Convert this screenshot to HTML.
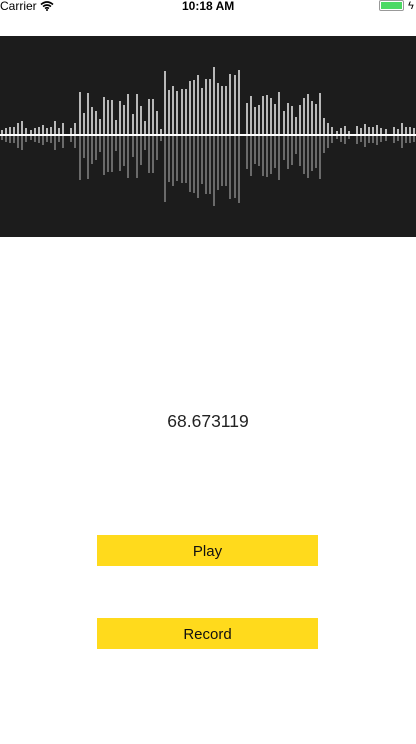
<!DOCTYPE html>
<html><head><meta charset="utf-8"><style>
body{margin:0;width:416px;height:744px;background:#fff;position:relative;overflow:hidden;font-family:"Liberation Sans",sans-serif}
.sb{position:absolute;top:0;height:12px;font-size:12px;line-height:12px;color:#000}
#wave{position:absolute;left:0;top:36px;width:416px;height:201px;background:#1c1c1c}
.u{position:absolute;width:2px;background:#b8b8b8}
.d{position:absolute;width:2px;background:#6a6a6a}
.line{position:absolute;left:0;top:98px;width:416px;height:2px;background:#fff}
.btn{position:absolute;left:97px;width:221px;height:31px;background:#ffda1c;text-align:center;line-height:33px;font-size:15px;color:#111}
</style></head><body>
<div class="sb" style="left:0">Carrier <svg width="14" height="10" viewBox="0 0 14 10" style="vertical-align:-1px"><path d="M1 3.5Q7 -1.5 13 3.5M3 5.5Q7 2.5 11 5.5M5 7.5Q7 6 9 7.5" stroke="#000" stroke-width="1.6" fill="none"/><circle cx="7" cy="9" r="1" fill="#000"/></svg></div>
<div class="sb" style="left:182px;font-weight:bold">10:18 AM</div>
<div style="position:absolute;left:379px;top:0;width:25px;height:11px;border:1px solid #999;border-radius:2px;padding:1px;box-sizing:border-box"><div style="width:100%;height:100%;background:#4cd964"></div></div>
<div style="position:absolute;left:408px;top:0;font-size:11px">ϟ</div>
<div id="wave"><div class="line"></div></div>
<div style="position:absolute;top:411px;width:416px;text-align:center;font-size:17.5px;color:#222">68.673119</div>
<div class="btn" style="top:535px">Play</div>
<div class="btn" style="top:618px">Record</div>
<script>
var h=[4,6,7,7,11,13,6,4,6,7,9,6,7,13,6,11,0,6,11,42,21,41,27,23,15,37,34,34,14,33,29,40,20,40,28,13,35,35,23,5,63,44,48,43,45,45,53,54,59,46,55,
55,67,51,48,48,60,59,64,0,31,38,27,29,38,39,36,30,42,23,31,28,17,29,36,40,33,30,41,16,11,7,3,6,8,3,0,8,6,10,7,7,9,6,5,0,7,5,11,7,7,6];
var w=document.getElementById('wave');
for(var i=0;i<h.length;i++){if(!h[i])continue;var x=1+i*4.08;
var u=document.createElement('div');u.className='u';u.style.left=x+'px';u.style.top=(98-h[i])+'px';u.style.height=h[i]+'px';w.appendChild(u);
var d=document.createElement('div');d.className='d';d.style.left=x+'px';d.style.top='100px';d.style.height=Math.round(h[i]*1.05)+'px';w.appendChild(d);}
</script>
</body></html>
